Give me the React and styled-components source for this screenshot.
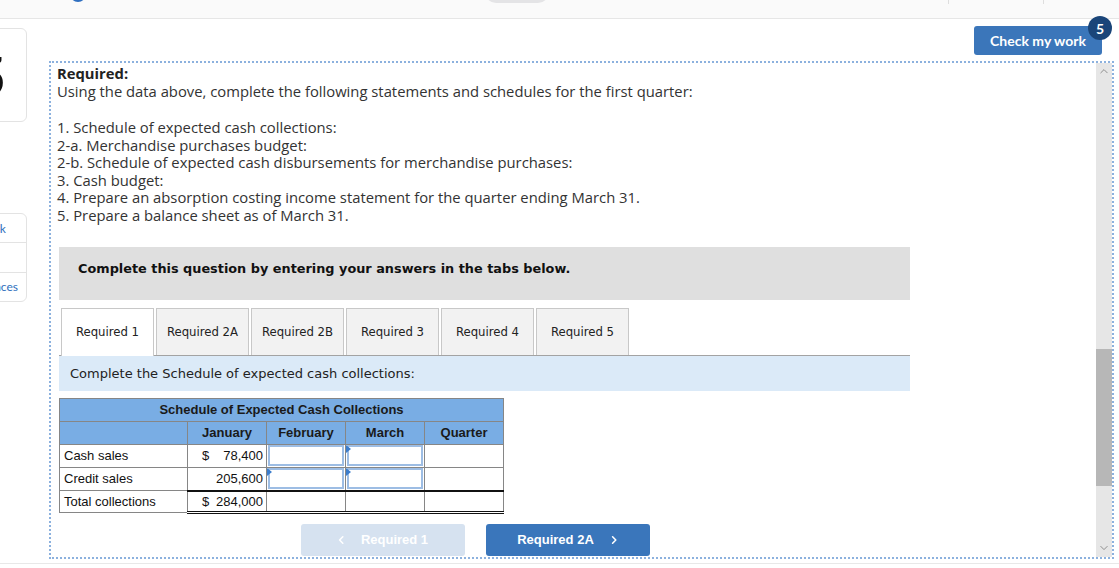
import React from "react";
import styled, { createGlobalStyle } from "styled-components";

const GlobalStyle = createGlobalStyle`
  html, body {
    margin: 0;
    padding: 0;
    background: #ffffff;
    overflow: hidden;
  }
  body {
    font-family: "Open Sans", Lato, sans-serif;
    color: #333333;
  }
`;

const Page = styled.div`
  width: 1119px;
  height: 568px;
  display: flex;
  flex-direction: column;
  overflow: hidden;
`;

const TopBar = styled.div`
  flex: none;
  height: 18px;
  background: #fafafa;
  border-bottom: 1px solid #e6e6e6;
  display: flex;
  align-items: flex-start;
  overflow: hidden;
`;

const TopDot = styled.div`
  flex: none;
  width: 16px;
  height: 16px;
  margin: -14px 0 0 70px;
  border-radius: 50%;
  background: #2f6fc0;
`;

const TopPill = styled.div`
  flex: none;
  width: 64px;
  height: 22px;
  margin: -19px 0 0 399px;
  border-radius: 11px;
  background: #e4e4e6;
`;

const TopTick = styled.div`
  flex: none;
  width: 1px;
  height: 4px;
  margin-left: ${(p) => p.$gap}px;
  background: #dedede;
`;

const Body = styled.div`
  flex: none;
  height: 544px;
  display: flex;
`;

const Rail = styled.div`
  flex: none;
  width: 28px;
  overflow: hidden;
  display: flex;
  flex-direction: column;
`;

const RailCard = styled.div`
  flex: none;
  width: 76px;
  margin-left: -49px;
  margin-top: ${(p) => p.$top}px;
  height: ${(p) => p.$h}px;
  border: 1px solid #e3e3e3;
  border-radius: 6px;
  box-sizing: border-box;
  background: #fff;
  display: flex;
  flex-direction: column;
`;

const BigNumber = styled.div`
  flex: 1;
  display: flex;
  align-items: center;
  justify-content: flex-end;
  padding-right: 20px;
  font-family: Lato, sans-serif;
  font-weight: 700;
  font-size: 56px;
  color: #111;
`;

const RailItem = styled.div`
  flex: 1;
  display: flex;
  align-items: center;
  justify-content: center;
  font-family: Lato, sans-serif;
  font-size: 12px;
  color: #2f6fbd;
  border-top: ${(p) => (p.$first ? "none" : "1px solid #e3e3e3")};
`;

const Main = styled.div`
  flex: 1;
  margin: 0 5px 0 21px;
  display: flex;
  flex-direction: column;
`;

const Header = styled.div`
  flex: none;
  height: 42px;
  box-sizing: border-box;
  padding: 7px 12px 0 0;
  display: flex;
  justify-content: flex-end;
  align-items: flex-start;
`;

const CheckButton = styled.button`
  position: relative;
  width: 128px;
  height: 29px;
  border: none;
  border-radius: 3px;
  background: #3b76ba;
  color: #fff;
  font-family: Lato, sans-serif;
  font-weight: 700;
  font-size: 14px;
  padding: 0;
  cursor: pointer;
`;

const Badge = styled.span`
  position: absolute;
  top: -10px;
  right: -10px;
  width: 24px;
  height: 24px;
  border-radius: 50%;
  background: #1a4579;
  color: #fff;
  font-size: 14px;
  font-weight: 700;
  display: flex;
  align-items: center;
  justify-content: center;
`;

const Box = styled.div`
  flex: none;
  height: 498px;
  box-sizing: border-box;
  border: 2px dotted #8cb1de;
  display: flex;
  overflow: hidden;
`;

const Content = styled.div`
  flex: 1;
  padding: 1px 0 0 6px;
  overflow: hidden;
`;

const Scrollbar = styled.div`
  flex: none;
  width: 16px;
  background: #e6e6e6;
  display: flex;
  flex-direction: column;
  align-items: center;
`;

const ScrollArrow = styled.div`
  flex: none;
  height: 18px;
  display: flex;
  align-items: center;
  justify-content: center;
  margin-top: ${(p) => (p.$down ? "auto" : "0")};
`;

const Thumb = styled.div`
  flex: none;
  width: 16px;
  height: 137px;
  margin-top: 268px;
  background: #b7b7b7;
`;

const Intro = styled.div`
  font-size: 14.8px;
  line-height: 18px;
  color: #333;
`;

const Strong = styled.div`
  font-weight: 700;
  color: #222;
`;

const Steps = styled.div`
  margin-top: 19px;
  font-size: 14.8px;
  line-height: 17.6px;
  color: #333;
`;

const Question = styled.div`
  width: 851px;
  margin: 22px 0 0 2px;
`;

const Banner = styled.div`
  height: 53px;
  box-sizing: border-box;
  padding: 14px 19px 0;
  background: #dfdfdf;
  font-family: "DejaVu Sans", Verdana, sans-serif;
  font-weight: 700;
  font-size: 12.85px;
  line-height: 16px;
  color: #111;
`;

const Tabs = styled.div`
  margin-top: 8px;
  padding-left: 2px;
  display: flex;
  align-items: flex-start;
  height: 47px;
  border-bottom: 1px solid #a3a3a3;
`;

const Tab = styled.div`
  flex: none;
  width: 93px;
  height: ${(p) => (p.$active ? 48 : 47)}px;
  margin-right: 2px;
  box-sizing: border-box;
  border: 1px solid #c8c8c8;
  border-bottom: none;
  background: ${(p) => (p.$active ? "#ffffff" : "#f2f2f2")};
  display: flex;
  align-items: center;
  justify-content: center;
  padding-bottom: ${(p) => (p.$active ? 1 : 0)}px;
  font-family: "DejaVu Sans Condensed", "DejaVu Sans", sans-serif;
  font-stretch: condensed;
  font-size: 13px;
  color: #222;
  position: relative;
  z-index: 1;
`;

const Instruction = styled.div`
  height: 35px;
  padding-left: 11px;
  background: #dbeaf8;
  display: flex;
  align-items: center;
  font-family: "DejaVu Sans", Verdana, sans-serif;
  font-size: 13px;
  color: #222;
`;

const Table = styled.table`
  margin-top: 7px;
  width: 445px;
  border-collapse: collapse;
  table-layout: fixed;
  font-family: "Liberation Sans", Arial, sans-serif;
  font-size: 13px;
  color: #111;
`;

const Th = styled.th`
  height: 22px;
  padding: 0;
  background: #79ade4;
  border: 1px solid #868686;
  font-weight: 700;
  color: #1a1a1a;
  text-align: center;
`;

const Td = styled.td`
  height: ${(p) => (p.$short ? 19 : 22)}px;
  padding: ${(p) => (p.$label ? "0 0 0 4px" : "0")};
  border: 1px solid #868686;
  border-top: ${(p) => (p.$total ? "2px solid #111" : "1px solid #868686")};
  border-bottom: ${(p) => (p.$total ? "3px double #111" : "1px solid #868686")};
  text-align: left;
  position: relative;
  white-space: nowrap;
`;

const Amount = styled.div`
  display: flex;
  justify-content: space-between;
  padding: 0 3px 0 14px;
`;

const Input = styled.div`
  height: 21px;
  margin: 0 1px;
  box-sizing: border-box;
  border: 2px solid #9dbde4;
  background: #fff;
`;

const Flag = styled.span`
  position: absolute;
  top: 0;
  left: 0;
  width: 0;
  height: 0;
  border-top: 4px solid transparent;
  border-bottom: 4px solid transparent;
  border-left: 5px solid #3c7dcc;
`;

const Nav = styled.div`
  margin-top: 10px;
  padding-left: 242px;
  display: flex;
  gap: 21px;
`;

const NavButton = styled.button`
  width: 164px;
  height: 32px;
  border: none;
  border-radius: 3px;
  background: ${(p) => (p.disabled ? "#d6e2f0" : "#3a76bb")};
  color: #fff;
  font-family: "Liberation Sans", Arial, sans-serif;
  font-weight: 700;
  font-size: 13px;
  display: flex;
  align-items: center;
  justify-content: center;
  gap: ${(p) => (p.disabled ? 15 : 17)}px;
  padding: 0;
`;

const Footer = styled.div`
  flex: 1;
  border-top: 1px solid #e8e8e8;
`;

const Chevron = ({ dir, size = 8, color = "#fff", width = 2 }) => {
  const pts =
    dir === "left"
      ? "6,1 2,5 6,9"
      : dir === "right"
      ? "2,1 6,5 2,9"
      : dir === "up"
      ? "1,6 5,2 9,6"
      : "1,3 5,7 9,3";
  return (
    <svg width={size} height={size + 2} viewBox="0 0 10 10">
      <polyline points={pts} fill="none" stroke={color} strokeWidth={width} strokeLinecap="round" strokeLinejoin="round" />
    </svg>
  );
};

const tabs = ["Required 1", "Required 2A", "Required 2B", "Required 3", "Required 4", "Required 5"];

const steps = [
  "1. Schedule of expected cash collections:",
  "2-a. Merchandise purchases budget:",
  "2-b. Schedule of expected cash disbursements for merchandise purchases:",
  "3. Cash budget:",
  "4. Prepare an absorption costing income statement for the quarter ending March 31.",
  "5. Prepare a balance sheet as of March 31.",
];

export default function App() {
  return (
    <Page>
      <GlobalStyle />
      <TopBar>
        <TopDot />
        <TopPill />
        <TopTick $gap={399} />
        <TopTick $gap={94} />
      </TopBar>
      <Body>
        <Rail>
          <RailCard $top={9} $h={94}>
            <BigNumber>5</BigNumber>
          </RailCard>
          <RailCard $top={91} $h={89}>
            <RailItem $first>eBook</RailItem>
            <RailItem />
            <RailItem>References</RailItem>
          </RailCard>
        </Rail>
        <Main>
          <Header>
            <CheckButton>
              Check my work
              <Badge>5</Badge>
            </CheckButton>
          </Header>
          <Box>
            <Content>
              <Intro>
                <Strong>Required:</Strong>
                Using the data above, complete the following statements and schedules for the first quarter:
              </Intro>
              <Steps>
                {steps.map((s) => (
                  <div key={s}>{s}</div>
                ))}
              </Steps>
              <Question>
                <Banner>Complete this question by entering your answers in the tabs below.</Banner>
                <Tabs>
                  {tabs.map((t, i) => (
                    <Tab key={t} $active={i === 0}>
                      {t}
                    </Tab>
                  ))}
                </Tabs>
                <Instruction>Complete the Schedule of expected cash collections:</Instruction>
                <Table>
                  <colgroup>
                    <col style={{ width: 128 }} />
                    <col style={{ width: 79 }} />
                    <col style={{ width: 79 }} />
                    <col style={{ width: 79 }} />
                    <col style={{ width: 79 }} />
                  </colgroup>
                  <thead>
                    <tr>
                      <Th colSpan={5}>Schedule of Expected Cash Collections</Th>
                    </tr>
                    <tr>
                      <Th />
                      <Th>January</Th>
                      <Th>February</Th>
                      <Th>March</Th>
                      <Th>Quarter</Th>
                    </tr>
                  </thead>
                  <tbody>
                    <tr>
                      <Td $label>Cash sales</Td>
                      <Td>
                        <Amount>
                          <span>$</span>
                          <span>78,400</span>
                        </Amount>
                      </Td>
                      <Td>
                        <Input />
                      </Td>
                      <Td>
                        <Input />
                        <Flag />
                      </Td>
                      <Td />
                    </tr>
                    <tr>
                      <Td $label>Credit sales</Td>
                      <Td>
                        <Amount>
                          <span />
                          <span>205,600</span>
                        </Amount>
                      </Td>
                      <Td>
                        <Input />
                        <Flag />
                      </Td>
                      <Td>
                        <Input />
                        <Flag />
                      </Td>
                      <Td />
                    </tr>
                    <tr>
                      <Td $label $short>Total collections</Td>
                      <Td $total $short>
                        <Amount>
                          <span>$</span>
                          <span>284,000</span>
                        </Amount>
                      </Td>
                      <Td $total $short />
                      <Td $total $short />
                      <Td $total $short />
                    </tr>
                  </tbody>
                </Table>
                <Nav>
                  <NavButton disabled>
                    <Chevron dir="left" />
                    Required 1
                  </NavButton>
                  <NavButton>
                    Required 2A
                    <Chevron dir="right" />
                  </NavButton>
                </Nav>
              </Question>
            </Content>
            <Scrollbar>
              <ScrollArrow>
                <Chevron dir="up" size={8} color="#8a8a8a" width={1.2} />
              </ScrollArrow>
              <Thumb />
              <ScrollArrow $down>
                <Chevron dir="down" size={8} color="#8a8a8a" width={1.2} />
              </ScrollArrow>
            </Scrollbar>
          </Box>
        </Main>
      </Body>
      <Footer />
    </Page>
  );
}
